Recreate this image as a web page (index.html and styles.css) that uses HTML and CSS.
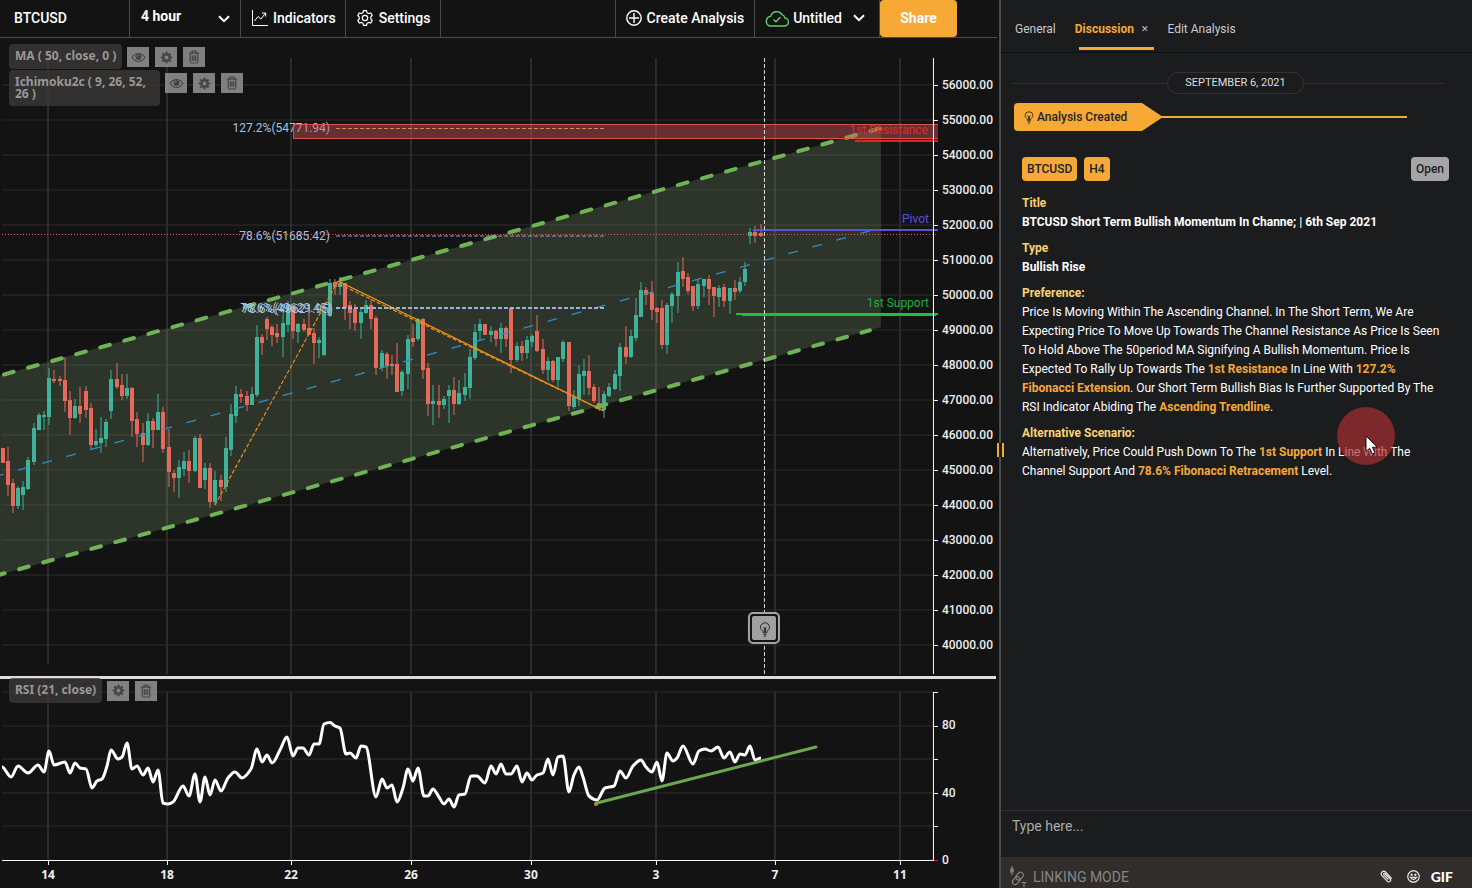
FILE: index.html
```
<!DOCTYPE html>
<html lang="en">
<head>
<meta charset="utf-8">
<title>BTCUSD</title>
<link rel="stylesheet" href="styles.css">
</head>
<body>
<svg class="defs" aria-hidden="true">
  <symbol id="eye" viewBox="0 0 16 12"><path d="M1 6C3 3 5.300 1.700 8 1.700S13 3 15 6c-2 3-4.300 4.300-7 4.300S3 9 1 6z" fill="none" stroke="currentColor" stroke-width="1.200"/><circle cx="8" cy="5.500" r="3.200" fill="currentColor"/><path d="M6.300 5.300A1.800 1.800 0 0 1 8 3.600" fill="none" stroke="#909090" stroke-width=".8"/></symbol>
  <symbol id="cog" viewBox="0 0 14 14"><circle cx="7" cy="7" r="3.400" fill="none" stroke="currentColor" stroke-width="2.400"/><path d="M7 .8v2.400M7 10.800v2.400M.8 7h2.400M10.800 7h2.400M2.600 2.600l1.700 1.700M9.700 9.700l1.700 1.700M11.400 2.600L9.700 4.300M4.300 9.700l-1.700 1.700" stroke="currentColor" stroke-width="2.400"/></symbol>
  <symbol id="bin" viewBox="0 0 12 14"><path d="M1 3.200h10M4 3V1.200h4V3M2.200 3.500v8.300q0 1.200 1.200 1.200h5.200q1.200 0 1.200-1.200V3.500M4.300 5.300v5.600M6 5.300v5.600M7.700 5.300v5.600" fill="none" stroke="currentColor" stroke-width="1.200"/></symbol>
  <symbol id="chev" viewBox="0 0 12 8"><path d="M1 1.200l5 5 5-5" fill="none" stroke="currentColor" stroke-width="2"/></symbol>
  <symbol id="bulb" viewBox="0 0 12 16"><path d="M4 11.500V10C2.600 8.900 1.200 7.600 1.200 5.700a4.800 4.800 0 0 1 9.600 0C10.800 7.600 9.400 8.900 8 10v1.500zM4.200 13.200h3.600M4.800 15h2.400M4.200 6l1.300 1 .5-1 .5 1 1.300-1M5.400 7v4M6.600 7v4" fill="none" stroke="currentColor"/></symbol>
</svg>
<div class="app">
  <main class="workspace">
    <header class="toolbar">
      <button class="cell symbol">BTCUSD</button>
      <label class="cell period"><select aria-label="Period"><option>4 hour</option></select><svg class="chev"><use href="#chev"/></svg></label>
      <button class="cell indicators"><svg class="ic16" viewBox="0 0 16 16" fill="none" stroke="currentColor"><path d="M.5 0v15.500H16"/><path d="M2.500 11l3.500-4.500 3 2.500 4.500-6M10 3h3.700v3.500"/></svg>Indicators</button>
      <button class="cell settings"><svg class="ic16" viewBox="0 0 16 16" fill="none" stroke="currentColor" stroke-width="1.200"><circle cx="8" cy="8" r="2.700"/><path d="M6.500.7h3l.5 2 1.700.9 2-.6 1.500 2.500-1.400 1.500v2l1.400 1.500-1.500 2.500-2-.6-1.700.9-.5 2h-3l-.5-2-1.700-.9-2 .6L.8 10.500 2.200 9V7L.8 5.500 2.300 3l2 .6L6 2.700z"/></svg>Settings</button>
      <span class="spacer"></span>
      <button class="cell create"><svg class="ic16" viewBox="0 0 16 16" fill="none" stroke="currentColor" stroke-width="1.400"><circle cx="8" cy="8" r="7.200"/><path d="M8 3v10M3 8h10"/></svg>Create Analysis</button>
      <button class="cell untitled"><svg class="cloud" viewBox="0 0 24 17" fill="none" stroke="currentColor" stroke-width="1.400"><path d="M5 16h14a4 4 0 0 0 .8-8A4.300 4.300 0 0 0 17 4.600 6.200 6.200 0 0 0 5.700 6.400 4.900 4.900 0 0 0 5 16z"/><path d="M8.500 9.500l2.500 2.300 4.500-4.800"/></svg>Untitled<svg class="chev"><use href="#chev"/></svg></button>
      <button class="share">Share</button>
    </header>
    <section class="pane">
      <svg class="plot" id="price" viewBox="0 38 999 638"></svg>
      <div class="studies">
        <div class="study"><span class="chip">MA ( 50, close, 0 )</span><button class="tool" aria-label="Show"><svg class="eye"><use href="#eye"/></svg></button><button class="tool" aria-label="Options"><svg class="cog"><use href="#cog"/></svg></button><button class="tool" aria-label="Delete"><svg class="bin"><use href="#bin"/></svg></button></div>
        <div class="study"><span class="chip long">Ichimoku2c ( 9, 26, 52, 26 )</span><button class="tool" aria-label="Show"><svg class="eye"><use href="#eye"/></svg></button><button class="tool" aria-label="Options"><svg class="cog"><use href="#cog"/></svg></button><button class="tool" aria-label="Delete"><svg class="bin"><use href="#bin"/></svg></button></div>
      </div>
    </section>
    <div class="split"></div>
    <section class="pane rsi">
      <svg class="plot" id="rsi" viewBox="0 679 999 209"></svg>
      <div class="studies">
        <div class="study"><span class="chip">RSI (21, close)</span><button class="tool" aria-label="Options"><svg class="cog"><use href="#cog"/></svg></button><button class="tool" aria-label="Delete"><svg class="bin"><use href="#bin"/></svg></button></div>
      </div>
    </section>
  </main>
  <div class="divider"><span class="grip"></span></div>
  <aside class="side">
    <nav class="tabs">
      <a href="#general">General</a>
      <a href="#discussion" class="active">Discussion<span class="close">✕</span></a>
      <a href="#edit">Edit Analysis</a>
    </nav>
    <div class="feed">
      <div class="date"><span>SEPTEMBER 6, 2021</span></div>
      <div class="event"><span class="tag"><svg class="bulb"><use href="#bulb"/></svg>Analysis Created</span><span class="rule"></span></div>
      <article class="post">
        <div class="meta"><span class="pill">BTCUSD</span><span class="pill">H4</span><button class="open">Open</button></div>
        <section><h2>Title</h2><p><b>BTCUSD Short Term Bullish Momentum In Channe; | 6th Sep 2021</b></p></section>
        <section><h2>Type</h2><p><b>Bullish Rise</b></p></section>
        <section><h2>Preference:</h2><p>Price Is Moving Within The Ascending Channel. In The Short Term, We Are Expecting Price To Move Up Towards The Channel Resistance As Price Is Seen To Hold Above The 50period MA Signifying A Bullish Momentum. Price Is Expected To Rally Up Towards The <em>1st Resistance</em> In Line With <em>127.2% Fibonacci Extension</em>. Our Short Term Bullish Bias Is Further Supported By The RSI Indicator Abiding The <em>Ascending Trendline</em>.</p></section>
        <section><h2>Alternative Scenario:</h2><p>Alternatively, Price Could Push Down To The <em>1st Support</em> In Line With The Channel Support And <em>78.6% Fibonacci Retracement</em> Level.</p></section>
      </article>
    </div>
    <textarea class="compose" placeholder="Type here..." aria-label="Message"></textarea>
    <footer class="actions">
      <button class="link"><svg class="linkic" viewBox="0 0 18 22" fill="none" stroke="currentColor" stroke-width="1.200"><path d="M3 0v9"/><path d="M3 2.500v4" stroke-width="3.500"/><rect x="3" y="12" width="8.500" height="5.500" rx="2.700" transform="rotate(-48 7.200 14.700)"/><rect x="6.300" y="7.500" width="8.500" height="5.500" rx="2.700" transform="rotate(-48 10.500 10.200)"/><path d="M12.500 16.500H17.500M15 16.500v4.800"/></svg>LINKING MODE</button>
      <button aria-label="Attach"><svg class="clip" viewBox="0 0 14 14" fill="none" stroke="currentColor" stroke-width="1.400"><path d="M12.700 9.300L6.200 2.400C3.500-.3-.5 3.300 2 6l5.800 6c2.300 2 4.900-.5 3-2.600L5.500 4c-1-.8-2.200.3-1.400 1.300l4.800 5"/></svg></button>
      <button aria-label="Emoji"><svg class="smile" viewBox="0 0 14 14" fill="none" stroke="currentColor" stroke-width="1.400"><circle cx="7" cy="7" r="6.200"/><path d="M3.700 8q3.300 4.400 6.600 0z"/><circle cx="5" cy="5.200" r=".6" fill="currentColor"/><circle cx="9" cy="5.200" r=".6" fill="currentColor"/></svg></button>
      <button class="gif">GIF</button>
    </footer>
    <div class="pointer"><svg viewBox="0 0 14 20"><path d="M1 1v15.500l3.700-3.300 2.500 5.800 2.700-1.200-2.500-5.600h5z" fill="#fff" stroke="#111"/></svg></div>
  </aside>
</div>
<script src="chart.js"></script>
</body>
</html>
```
FILE: styles.css
```
* { box-sizing: border-box; }
body { margin: 0; background: #131313; color: #fff; font-family: Roboto, "Liberation Sans", sans-serif; font-size: 12px; }
button, select, textarea { font: inherit; color: inherit; background: none; border: 0; padding: 0; margin: 0; }
svg { display: block; flex: none; }
.defs { position: absolute; width: 0; height: 0; }
.app { display: grid; grid-template-columns: minmax(0, 1fr) 2px 32%; min-height: 100vh; }

.toolbar { display: flex; height: 38px; margin-right: 2px; padding-right: 40px; border-bottom: 1px solid #4a4a4a; font-size: 14px; font-weight: 500; }
.cell { display: flex; align-items: center; gap: 5px; padding: 0 10px 1px 11px; border-right: 1px solid #4a4a4a; white-space: nowrap; }
.symbol { width: 130px; padding-left: 14px; }
.period { width: 111px; padding-bottom: 0; }
.period select { flex: 1; appearance: none; font-weight: 700; padding-bottom: 5px; }
.indicators { padding-right: 9px; }
.settings { gap: 6px; }
.spacer { flex: 1; border-right: 1px solid #4a4a4a; }
.create { padding-left: 10px; }
.untitled { gap: 4px; padding-left: 10px; padding-right: 14px; }
.untitled .chev { margin-left: 7px; }
.ic16 { width: 16px; height: 16px; }
.chev { width: 12px; height: 8px; }
.cloud { width: 24px; height: 17px; color: #5fd068; }
.share { width: 77px; height: 37px; padding-bottom: 1px; border-radius: 4px; background: #f6a935; font-weight: 700; }

.pane { position: relative; }
.split { height: 3px; margin-right: 3px; background: #e0dcde; }
.plot { width: 100%; height: auto; }
.studies { position: absolute; top: 6px; left: 9px; display: flex; flex-direction: column; gap: 1px; font-family: "Noto Sans", sans-serif; font-weight: 700; color: #989898; }
.rsi .studies { top: -1px; }
.study { display: flex; align-items: flex-start; gap: 6px; }
.chip { padding: 4px 6px 5px; line-height: 16px; border-radius: 4px; background: rgba(60, 57, 55, .8); margin-right: -1px; font-size: 12px; white-space: nowrap; }
.long { width: 151px; line-height: 12px; padding: 6px; white-space: normal; }
.tool { display: grid; place-items: center; width: 22px; height: 20px; margin-top: 3px; background: rgba(148, 148, 148, .85); color: #444; }
.eye { width: 15px; height: 11px; }
.cog { width: 13px; height: 13px; }
.bin { width: 12px; height: 14px; }
.axis { font-size: 12px; font-weight: 500; fill: #eee; }
.dates { font-family: "Noto Sans", sans-serif; font-size: 12px; font-weight: 700; fill: #eee; text-anchor: middle; }
.fib { font-size: 12px; fill: #a3c3e0; text-anchor: end; }
.level { font-size: 12px; text-anchor: end; }

.divider { background: #4b4b4d; position: relative; z-index: 1; }
.grip { position: absolute; top: 443px; left: -2px; width: 7px; height: 14px; border: solid #f6a935; border-width: 0 2px; background: #1b1c1e; }

.side { position: relative; display: flex; flex-direction: column; background: #1b1c1e; }
.tabs { display: flex; gap: 19px; height: 53px; padding: 0 14px; border-bottom: 1px solid #101010; }
.tabs a { display: flex; align-items: center; height: 50px; padding-top: 7px; color: #c9c9c9; text-decoration: none; }
.tabs .active { position: relative; gap: 7px; color: #f6a935; font-weight: 700; }
.tabs .active::after { content: ""; position: absolute; left: 4px; right: -6px; bottom: 0; height: 3px; background: #f6a935; }
.close { font: 9px "DejaVu Sans", sans-serif; color: #c9c9c9; }
.feed { flex: 1; padding: 19px 23px 0 13px; }
.date { display: flex; align-items: center; margin: 0 5px 0 -2px; font-size: 11px; color: #ddd; }
.date::before, .date::after { content: ""; flex: 1; height: 1px; background: #373130; }
.date::before { flex: 156; }
.date::after { flex: 141; }
.date span { padding: 0 17px; line-height: 20px; border: 1px solid #373130; border-radius: 11px; }
.event { display: flex; align-items: center; margin: 9px 42px 0 0; }
.tag { display: flex; align-items: center; gap: 3px; width: 149px; height: 28px; padding: 0 10px; background: #f6a935; color: #242321; font-weight: 500; border-radius: 4px 0 0 4px; clip-path: polygon(0 0, 128px 0, 100% 50%, 128px 100%, 0 100%); }
.bulb { width: 10px; height: 13px; }
.rule { flex: 1; height: 2px; margin-left: -2px; background: #f6a935; }
.post { padding: 26px 0 0 8px; line-height: 19px; }
.meta { display: flex; align-items: center; gap: 7px; margin-bottom: 13px; font-weight: 500; color: #222; }
.pill { padding: 0 5px; line-height: 24px; border-radius: 4px; background: #f6a935; }
.open { margin-left: auto; padding: 0 5px; line-height: 24px; border-radius: 4px; background: #a5a5a7; }
.post section { margin-bottom: 7px; }
.post h2, .post p { margin: 0; font-size: 12px; }
.post h2 { color: #fdd26e; font-weight: 700; }
.post em { color: #f6a935; font-style: normal; font-weight: 700; }
.compose { display: block; height: 47px; padding: 7px 11px; border-top: 1px solid #373130; resize: none; outline: none; font-size: 14px; }
.compose::placeholder { color: #a9a9a9; opacity: 1; }
.actions { display: flex; align-items: center; gap: 14px; height: 31px; padding: 8px 19px 0 8px; background: #302d2b; color: #ddd; }
.link { display: flex; align-items: center; gap: 6px; margin-right: auto; font-size: 14px; color: #858585; }
.linkic { width: 18px; height: 22px; }
.clip, .smile { width: 13px; height: 13px; }
.gif { margin-left: -3px; font: 900 14px Lato, sans-serif; color: #fff; }
.pointer { position: absolute; left: 336px; top: 407px; width: 58px; height: 58px; border-radius: 50%; background: rgba(172, 45, 50, .68); }
.pointer svg { width: 14px; height: 20px; margin: 28px 0 0 28px; }
```
FILE: chart.js
```
// Candles: centre x, high, body top, body bottom, low, 1 when rising
const candles = [
[3,448,448,463,463,0],[8,447,461,485,496,0],[13,479,483,506,513,0],[18,486,488,506,509,1],[23,481,487,495,510,1],[28,457,460,489,490,1],[34,423,428,462,465,1],[39,413,415,430,430,1],[44,411,415,417,430,1],[49,368,378,417,425,1],
[54,370,379,381,383,0],[60,376,379,381,386,0],[65,357,380,401,412,0],[70,391,400,418,435,0],[75,399,406,418,419,1],[80,387,406,414,423,0],[86,386,391,410,418,0],[91,403,408,445,450,0],[96,429,441,445,447,1],[101,417,438,443,453,1],
[106,419,422,439,447,1],[111,370,379,411,419,1],[117,363,379,387,389,0],[122,374,385,396,400,0],[127,374,388,396,399,1],[132,387,388,421,437,0],[137,412,419,434,447,0],[143,423,433,445,462,0],[148,413,421,445,446,1],[153,418,421,430,448,0],
[158,394,412,430,430,1],[163,407,412,449,453,0],[169,429,447,472,487,0],[174,470,473,478,492,0],[179,460,467,478,498,1],[184,452,461,469,476,1],[189,450,461,471,483,0],[195,436,438,471,472,1],[200,434,438,488,488,0],[205,463,468,480,489,1],
[210,463,468,502,508,0],[215,471,480,502,505,1],[221,475,480,487,501,0],[226,437,448,487,492,1],[231,404,414,450,456,1],[236,386,394,416,423,1],[241,389,394,397,403,0],[247,391,396,405,411,0],[252,387,394,405,405,1],[257,325,337,395,397,1],
[262,334,337,343,355,0],[267,317,319,329,340,0],[272,325,327,335,346,0],[277,324,333,337,343,0],[283,314,323,337,357,1],[288,301,305,325,332,1],[293,305,307,331,339,0],[298,323,324,332,343,1],[304,319,324,330,332,0],[309,313,328,335,335,0],
[314,328,333,343,364,0],[319,337,340,343,358,1],[324,307,312,355,356,1],[330,279,283,316,317,1],[335,279,282,287,295,0],[340,277,283,287,295,1],[345,283,283,308,320,0],[350,301,305,313,329,0],[355,304,309,323,331,0],[361,309,312,323,339,1],
[366,300,305,313,314,1],[371,299,305,319,329,0],[376,316,318,368,375,0],[382,350,353,368,371,1],[387,352,354,366,379,0],[392,355,364,366,375,0],[397,343,364,392,392,0],[402,370,372,391,396,1],[408,335,339,374,389,1],[413,324,338,342,347,0],
[418,318,319,339,341,1],[423,318,319,370,379,0],[428,363,368,404,416,0],[433,385,401,404,425,1],[439,385,401,405,418,0],[444,396,399,405,409,1],[449,385,390,396,423,1],[454,377,390,404,415,0],[459,380,393,404,405,1],[465,373,387,395,401,1],
[470,349,357,388,399,1],[475,324,332,358,360,1],[480,319,324,331,341,1],[485,324,324,335,335,0],[491,326,331,335,342,1],[496,330,331,339,346,0],[501,323,328,339,353,1],[506,326,328,339,347,0],[511,307,308,360,373,0],[517,342,346,360,362,1],
[522,341,346,353,361,0],[527,336,340,353,359,1],[532,334,336,342,347,1],[537,315,331,351,352,0],[543,339,349,370,374,0],[548,357,361,370,381,1],[553,360,361,380,382,0],[558,357,357,380,387,1],[563,340,342,359,362,1],[569,342,342,406,411,0],
[574,390,397,407,409,1],[579,365,374,399,406,1],[584,359,371,376,395,1],[589,355,371,388,395,0],[594,384,387,401,403,0],[599,387,403,408,411,0],[604,391,394,410,418,1],[609,383,387,396,397,1],[615,370,374,389,390,1],[620,343,347,376,391,1],
[626,326,347,357,364,0],[631,330,336,357,358,1],[636,298,315,338,341,1],[641,282,290,317,317,1],[646,287,290,295,305,0],[652,281,293,310,320,0],[657,307,308,312,323,0],[662,300,308,345,349,0],[667,303,305,345,354,1],[672,292,294,306,323,1],
[678,262,272,296,313,1],[683,257,271,279,287,0],[688,273,277,291,294,0],[693,286,286,306,311,0],[698,279,284,306,309,1],[704,279,279,286,297,1],[709,275,279,289,305,0],[714,287,287,296,317,0],[719,285,288,297,307,1],[724,284,287,301,307,0],
[730,288,288,301,314,1],[735,280,288,292,300,0],[740,277,282,291,293,1],[745,262,269,282,286,1],[750,228,232,236,244,1],[755,226,232,236,243,0],[761,224,233,236,237,0]
];
const rsi = [[2,767],[11,777],[18,766],[28,773],[38,765],[44,772],[49,751],[54,765],[65,762],[70,773],[75,763],[80,768],[86,769],[92,788],[97,781],[102,779],[107,766],[111,750],[118,759],[122,757],[127,743],[132,769],[137,766],[143,775],[148,768],[153,782],[158,770],[163,803],[168,804],[173,802],[183,786],[189,796],[195,774],[200,802],[205,777],[210,795],[215,780],[221,791],[228,778],[235,772],[242,778],[251,769],[257,749],[262,762],[267,755],[272,763],[280,750],[287,737],[293,756],[298,748],[303,748],[309,755],[314,744],[319,744],[324,724],[330,722.500],[335,726],[340,728],[346,754],[350,753],[356,758],[361,746],[366,747],[376,797],[382,779],[387,788],[392,785],[397,802],[403,788],[408,769],[413,781],[418,768],[424,796],[428,796],[433,789],[439,797],[444,804],[449,799],[454,807],[459,795],[465,794],[471,776],[477,776],[485,783],[491,766],[496,774],[501,764],[506,774],[511,774],[517,766],[522,782],[527,773],[532,780],[537,775],[543,773],[548,759],[553,775],[558,757],[563,756],[569,792],[574,775],[579,767],[583,777],[589,796],[597,800],[605,788],[614,786],[620,771],[626,778],[633,766],[641,760],[646,767],[652,772],[657,762],[662,781],[667,753],[673,761],[677,758],[683,746],[693,764],[699,751],[705,749],[711,751],[718,747],[724,758],[730,752],[735,762],[740,754],[745,755],[750,746],[755,760],[761,758]];
const days = [[48, 14], [167, 18], [291, 22], [411, 26], [531, 30], [656, 3], [775, 7], [900, 11]];

const line = (x1, y1, x2, y2, color, w = 1, extra = "") =>
  `<line x1="${x1}" y1="${y1}" x2="${x2}" y2="${y2}" stroke="${color}" stroke-width="${w}" ${extra}/>`;
const text = (x, y, value, cls, extra = "") => `<text x="${x}" y="${y}" class="${cls}" ${extra}>${value}</text>`;

// Monotone cubic through the points, flat at every local extreme
function smooth(p) {
  const s = (i) => (p[i + 1][1] - p[i][1]) / (p[i + 1][0] - p[i][0]);
  const m = p.map((_, i) => {
    if (i === 0 || i === p.length - 1) return 0;
    const a = s(i - 1), b = s(i);
    return a * b <= 0 ? 0 : 2 * a * b / (a + b);
  });
  let d = `M${p[0]}`;
  for (let i = 0; i < p.length - 1; i++) {
    const h = (p[i + 1][0] - p[i][0]) / 3;
    d += `C${p[i][0] + h},${p[i][1] + m[i] * h} ${p[i + 1][0] - h},${p[i + 1][1] - m[i + 1] * h} ${p[i + 1]}`;
  }
  return d;
}

let out = "";
for (let y = 85; y <= 645; y += 35) out += line(2, y, 933, y, "#1f1f1f", 2);
for (const [x] of days) out += line(x, 58, x, x === 48 ? 664 : 674, "#2c2c2c", 2);
out += `<polygon points="0,375.500 881,128 881,327 0,574.700" fill="rgba(150,185,130,.2)"/>`;
for (const [x, h, t, b, l, up] of candles) {
  const c = up ? "#3fb399" : "#e56a5c";
  out += `<rect x="${x - .5}" y="${h}" width="1" height="${l - h}" fill="${c}"/><rect x="${x - 2}" y="${t}" width="4" height="${Math.max(b - t, 1)}" fill="${c}"/>`;
}
const dash = 'stroke-dasharray="10 15"';
out += line(4, 374.500, 881, 128, "#6fb356", 4, dash + ' stroke-linecap="round"');
out += line(-5, 576, 870, 330.300, "#6fb356", 4, dash + ' stroke-linecap="round"');
out += line(-6, 476.800, 870, 230.800, "#2f8fc4", 1.3, dash);
const fine = 'stroke-dasharray="4 2"';
out += line(215, 505, 338, 281, "#e08a1c", 1.3, fine);
out += line(338, 281, 604, 411, "#f7931a", 1.3);
out += line(339, 284, 604, 411, "#e08a1c", 1.3, fine);
out += line(336, 128.500, 606, 128.500, "#b9c46a", 1, fine);
out += line(336, 236, 606, 236, "#86a9c4", 1, fine);
out += line(336, 308, 606, 308, "#a3c3f0", 2, 'stroke-dasharray="4 2" opacity=".9"');
out += text(330, 132, "127.2%(54771.94)", "fib") + text(330, 240, "78.6%(51685.42)", "fib");
out += text(331, 312, "78.6%(49629.45)", "fib") + text(333, 313, "78.6%(49621.95)", "fib");
out += `<path d="M938 124.500H293.500v14H938" fill="rgba(220,85,85,.42)" stroke="#d9534f"/>`;
out += text(928, 134, "1st Resistance", "level", 'fill="#d32f2f"') + line(855, 141, 938, 141, "#e02424", 2);
out += line(2, 234.500, 938, 234.500, "#e8604f", 1, 'stroke-dasharray="1 2"');
out += line(753, 230, 938, 230, "#5b52d6", 2) + text(929, 223, "Pivot", "level", 'fill="#5b52d6"');
out += line(736, 314, 938, 314, "#1fbf3c", 2) + line(742, 315, 936, 315, "#1fbf3c", 2) + text(929, 307, "1st Support", "level", 'fill="#1fae3c"');
out += line(933.500, 58, 933.500, 674, "#fff");
for (let i = 0; i < 17; i++) {
  const y = 85 + i * 35;
  out += line(933, y + .5, 938, y + .5, "#fff") + text(942, y + 4, (56 - i) * 1000 + ".00", "axis");
}
out += line(764.500, 58, 764.500, 674, "#ddd", 1, 'stroke-dasharray="4 2"');
out += `<rect x="749" y="613" width="30" height="30" rx="4" fill="#131313" stroke="#a5a5a5" stroke-width="2"/><rect x="752" y="616" width="24" height="24" rx="2" fill="#a0a0a0"/><use href="#bulb" x="759" y="622" width="12" height="15" color="#222"/>`;
document.getElementById("price").innerHTML = out;

out = "";
for (const y of [692, 726, 759, 793, 826]) out += line(2, y, 933, y, "#1f1f1f", 2) + line(933, y + .5, 938, y + .5, "#fff");
for (const [x, day] of days) out += line(x, 692, x, 860, "#2c2c2c", 2) + line(x + .5, 860, x + .5, 865, "#fff") + text(x, 879, day, "dates");
out += line(2, 860.500, 933, 860.500, "#fff") + line(933, 860.500, 938, 860.500, "#e02424") + line(933.500, 692, 933.500, 861, "#fff");
out += text(942, 729, "80", "axis") + text(942, 797, "40", "axis") + text(942, 864, "0", "axis");
out += `<path d="${smooth(rsi)}" fill="none" stroke="#fff" stroke-width="3"/><circle cx="596" cy="804" r="2" fill="#e08a1c"/>`;
out += line(597, 803, 816, 747, "#6aa84f", 3, 'stroke-linecap="round"');
document.getElementById("rsi").innerHTML = out;
```
